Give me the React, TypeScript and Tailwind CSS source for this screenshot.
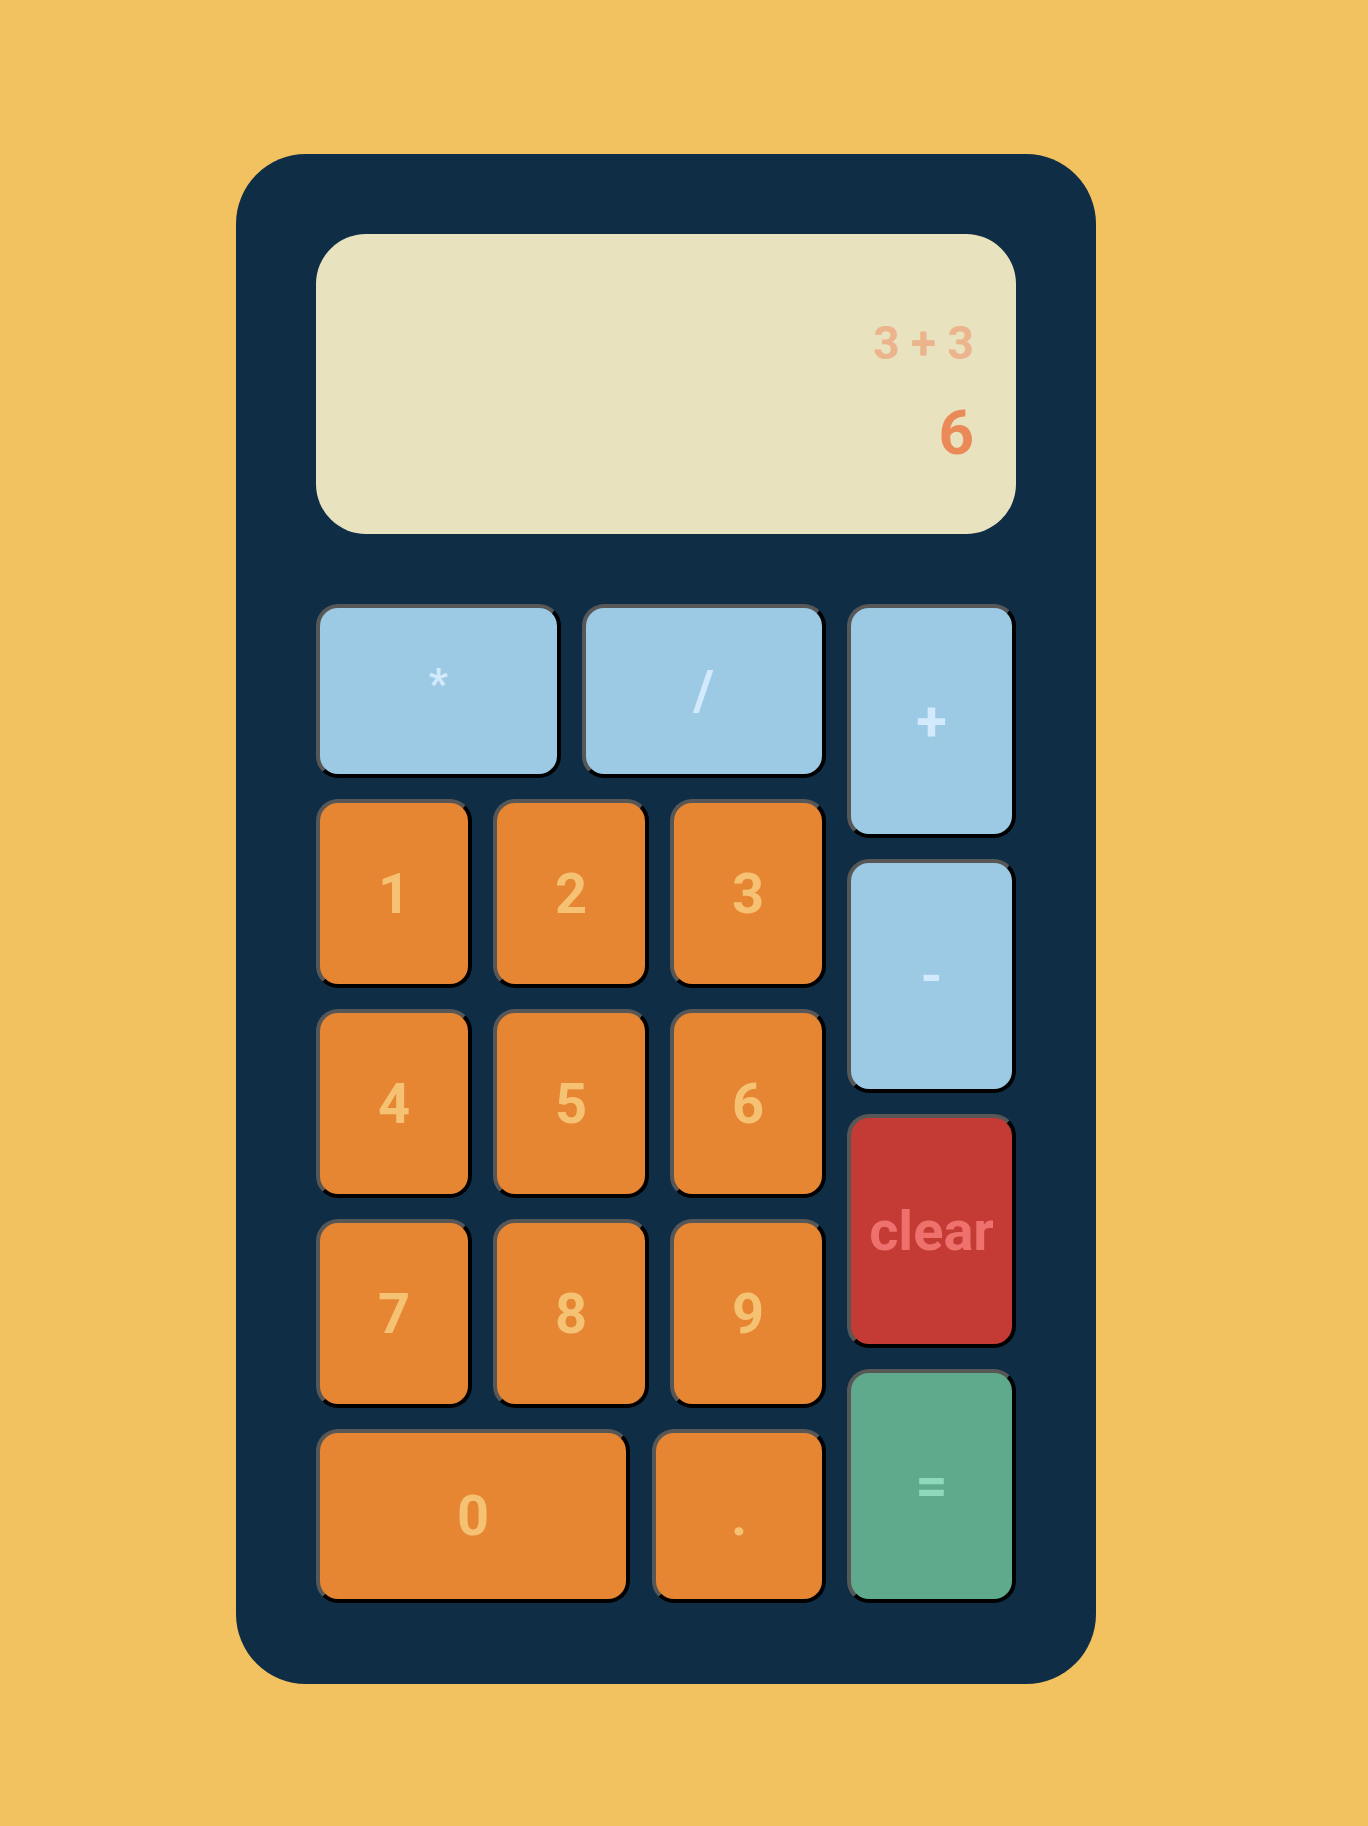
import React, { useState } from 'react';

type Tone = 'op' | 'num' | 'clear' | 'eq';

const tones: Record<Tone, string> = {
  op: 'bg-[#9cc9e3] text-[#d2eafb]',
  num: 'bg-[#e68532] text-[#f5c274]',
  clear: 'bg-[#c43a34] text-[#ee716d]',
  eq: 'bg-[#5fa98c] text-[#8fd8bb]',
};

const Key: React.FC<{ label: string; tone: Tone; className?: string; size?: string; onPress: (v: string) => void }> = ({
  label,
  tone,
  className = '',
  size = 'text-[56px]',
  onPress,
}) => (
  <button
    onClick={() => onPress(label)}
    className={`${tones[tone]} ${className} ${size} flex items-center justify-center rounded-[22px] border-4 border-t-[#575757] border-l-[#575757] border-r-black border-b-black font-bold leading-none`}
  >
    {label}
  </button>
);

const App: React.FC = () => {
  const [expr, setExpr] = useState('3 + 3');
  const [result, setResult] = useState('6');

  const press = (v: string) => {
    if (v === 'clear') {
      setExpr('');
      setResult('');
      return;
    }
    if (v === '=') {
      try {
        // eslint-disable-next-line no-new-func
        const r = Function(`return (${expr})`)();
        setResult(String(r));
      } catch (err) {
        setResult('err');
      }
      return;
    }
    const isOp = ['+', '-', '*', '/'].includes(v);
    setExpr((e) => (isOp ? `${e} ${v} ` : e + v));
  };

  return (
    <div className="min-h-[1826px] bg-[#f2c160] pt-[154px] pl-[236px] pb-[142px]" style={{ fontFamily: 'Roboto, "Liberation Sans", sans-serif' }}>
      <div className="w-[860px] h-[1530px] rounded-[70px] bg-[#0f2d45] p-[80px]">
        <div className="h-[300px] rounded-[50px] bg-[#e9e2be] flex flex-col items-end pt-[86px] pr-[42px]">
          <div className="h-[44px] text-[46px] font-bold leading-none text-[#ebb48c] whitespace-pre">{expr}</div>
          <div className="mt-[38px] text-[62px] font-bold leading-none text-[#eb8a59]">{result}</div>
        </div>

        <div className="mt-[70px] flex gap-[21px]">
          <div className="w-[510px] flex flex-col gap-[21px]">
            <div className="h-[174px] grid grid-cols-2 gap-[21px]">
              <Key label="*" tone="op" size="text-[42px] pb-[14px]" onPress={press} />
              <Key label="/" tone="op" onPress={press} />
            </div>
            {[
              ['1', '2', '3'],
              ['4', '5', '6'],
              ['7', '8', '9'],
            ].map((row) => (
              <div key={row[0]} className="h-[189px] grid grid-cols-3 gap-[21px]">
                {row.map((d) => (
                  <Key key={d} label={d} tone="num" onPress={press} />
                ))}
              </div>
            ))}
            <div className="h-[174px] flex gap-[22px]">
              <Key label="0" tone="num" className="w-[314px]" onPress={press} />
              <Key label="." tone="num" className="flex-1" onPress={press} />
            </div>
          </div>

          <div className="w-[169px] flex flex-col gap-[21px]">
            <Key label="+" tone="op" className="h-[234px]" onPress={press} />
            <Key label="-" tone="op" className="h-[234px]" onPress={press} />
            <Key label="clear" tone="clear" className="h-[234px]" onPress={press} />
            <Key label="=" tone="eq" className="h-[234px]" onPress={press} />
          </div>
        </div>
      </div>
    </div>
  );
};

export default App;
